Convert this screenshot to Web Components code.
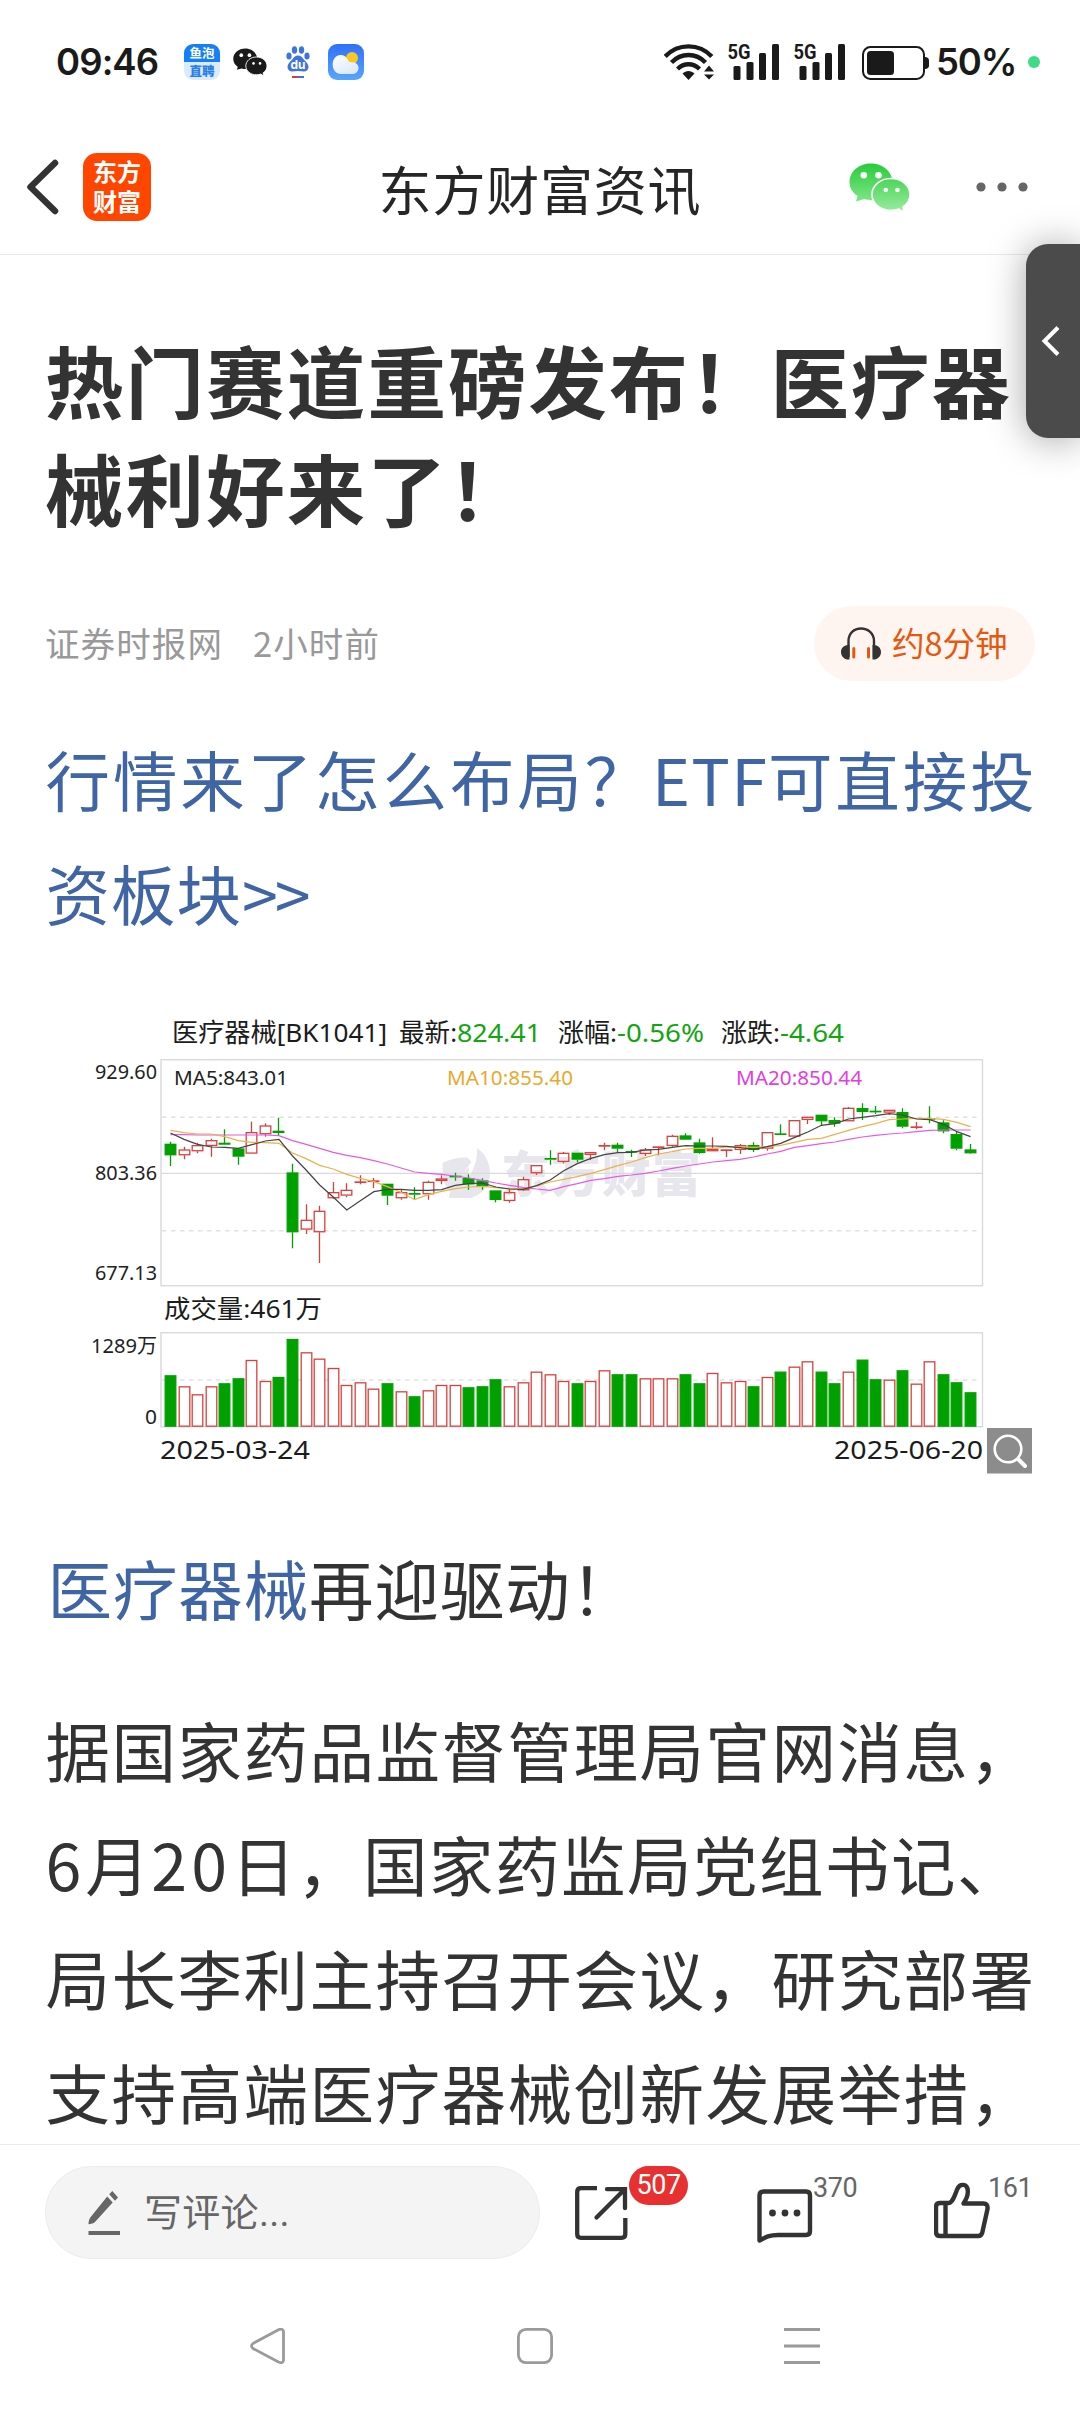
<!DOCTYPE html>
<html lang="zh-CN">
<head>
<meta charset="utf-8">
<title>东方财富资讯</title>
<style>
  html, body {
    margin: 0;
    padding: 0;
  }
  body {
    width: 1080px;
    height: 2412px;
    overflow: hidden;
    background: #fff;
    color: #333;
    font-family: "Noto Sans CJK SC", "Noto Sans", sans-serif;
  }
  /* latin runs inside of the article text */
  .etf { letter-spacing: 1.2px; }
  .more { letter-spacing: -3px; }
  .num { letter-spacing: 4px; }
</style>
</head>
<body>
<news-page>
  <status-bar slot="top" time="09:46" battery="50"></status-bar>
  <app-header slot="top">东方财富资讯</app-header>

  <article-head source="证券时报网" time="2小时前" listen="约8分钟">热门赛道重磅发布！医疗器<br>械利好来了！</article-head>
  <article-text kind="link">行情来了怎么布局？<span class="etf">ETF</span>可直接投<br><span style="letter-spacing:1px">资板块</span><span class="more">&gt;&gt;</span></article-text>
  <stock-chart></stock-chart>
  <article-text kind="lead"><span class="stock">医疗器械</span>再迎驱动！</article-text>
  <article-text>据国家药品监督管理局官网消息，<br><span class="num">6</span>月<span class="num">20</span>日，国家药监局党组书记、<br>局长李利主持召开会议，研究部署<br>支持高端医疗器械创新发展举措，</article-text>

  <comment-bar slot="bottom">写评论...</comment-bar>
  <nav-bar slot="bottom"></nav-bar>
  <side-tab slot="over"></side-tab>
</news-page>

<script>
// two chat bubbles, shared by the status bar and the header
const wechat = (id, w, h, c1, c2) => `
  <svg width="${w}" height="${h}" viewBox="0 0 61 49">
    <defs>
      <linearGradient id="${id}" x1="0" y1="0" x2="0" y2="49" gradientUnits="userSpaceOnUse">
        <stop offset="0" stop-color="${c1}"/><stop offset="1" stop-color="${c2}"/>
      </linearGradient>
    </defs>
    <g fill="url(#${id})">
      <path d="M22 .5C10 .5.5 8.500.5 19c0 6 3 10.500 8 14L7 38.500l8.500-2.500c2 .8 4.500 1.200 7 1.200C34 37.200 43.500 29 43.500 19S34 .5 22 .5z"/>
      <path stroke="#fff" stroke-width="1.600" d="M42 15.500c-10.500 0-19 7-19 16s8.500 16 19 16c3 0 5.500-.5 8-1.400l5 3.400-1-5.500c4.500-3 7-7.500 7-12.500 0-9-8.500-16-19-16z"/>
    </g>
    <g fill="#fff">
      <circle cx="14.800" cy="12.300" r="3.300"/><circle cx="29.500" cy="12.300" r="3.300"/>
      <circle cx="36.800" cy="27" r="2.300"/><circle cx="48.500" cy="27" r="2.300"/>
    </g>
  </svg>`;

class NewsPage extends HTMLElement {
  constructor() {
    super();
    this.attachShadow({ mode: "open" }).innerHTML = `
      <style>
        :host {
          display: flex;
          flex-direction: column;
          width: 1080px;
          height: 2412px;
          position: relative;
          overflow: hidden;
        }
        main {
          flex: 1;
          min-height: 0;
          overflow: hidden;
          padding: 0 45px;
        }
      </style>
      <slot name="top"></slot>
      <main><slot></slot></main>
      <slot name="bottom"></slot>
      <slot name="over"></slot>
    `;
  }
}

class StatusBar extends HTMLElement {
  constructor() {
    super();
    const signal = `
      <svg width="52" height="48" viewBox="-1 -6 52 48" fill="#1a1a1a">
        <text x="-.5" y="15" font-family="Roboto" font-weight="700" font-size="21" textLength="23" lengthAdjust="spacingAndGlyphs">5G</text>
        <rect x="5.500" y="22" width="7" height="14" rx="1.500"/>
        <rect x="18.500" y="18" width="7" height="18" rx="1.500"/>
        <rect x="31" y="9" width="7" height="27" rx="1.500"/>
        <rect x="44" y="0" width="7" height="36" rx="1.500"/>
      </svg>`;
    this.attachShadow({ mode: "open" }).innerHTML = `
      <style>
        :host {
          display: flex;
          align-items: center;
          height: 124px;
          box-sizing: border-box;
          padding: 0 40px 0 56px;
          color: #1a1a1a;
          font-family: Inter, sans-serif;
          font-weight: 600;
        }
        svg { display: block; flex: none; }
        .time { font-size: 36.500px; letter-spacing: -.9px; width: 128px; line-height: 40px; white-space: nowrap; }
        .apps { display: flex; align-items: center; flex: 1; }
        .yupao {
          width: 36px;
          height: 36px;
          border-radius: 9px;
          background: linear-gradient(#1580f6 0 50%, #d9ebfd 50%);
          color: #fff;
          font: 700 12.500px/18px "Noto Sans CJK SC", sans-serif;
          text-align: center;
          overflow: hidden;
        }
        .yupao b { display: block; color: #2a80e8; }
        .wx { margin: 0 19px 0 13px; }
        .weather { margin-left: 18px; }
        .battery { margin: 1px 7px 0 17px; }
        .sig2 { margin-left: 14px; }
        .sig1 { margin-left: 13px; }
        .pct { font-size: 36.500px; width: 84px; letter-spacing: -1.100px; line-height: 40px; white-space: nowrap; }
        .dot { width: 12px; height: 12px; border-radius: 50%; background: #3ddc84; margin-left: 8px; }
      </style>
      <span class="time" id="time"></span>
      <div class="apps">
        <div class="yupao">鱼泡<b>直聘</b></div>
        <div class="wx">${wechat("wxDark", 34, 28, "#1a1a1a", "#1a1a1a")}</div>
        <svg width="24" height="32" viewBox="0 0 24 32" fill="#3f74dc">
          <ellipse cx="8.500" cy="4" rx="2.700" ry="3.800"/>
          <ellipse cx="15.500" cy="4" rx="2.700" ry="3.800"/>
          <ellipse cx="3" cy="10" rx="2.600" ry="3.500"/>
          <ellipse cx="21" cy="10" rx="2.600" ry="3.500"/>
          <path d="M12 9.500c-3 0-4 2-6 4.200-2.500 2.600-4.500 4-4.500 7.300 0 2.600 2 4.500 4.500 4.500 2 0 4-.5 6-.5s4 .5 6 .5c2.500 0 4.500-1.900 4.500-4.500 0-3.300-2-4.700-4.500-7.300-2-2.200-3-4.200-6-4.200z"/>
          <text x="4.500" y="22.500" fill="#fff" font-size="12" font-weight="700" font-family="Inter" textLength="15" lengthAdjust="spacingAndGlyphs">du</text>
          <path fill="#d6403c" d="M6 30h6v2H6z"/><path d="M12 30h6v2h-6z"/>
        </svg>
        <svg class="weather" width="36" height="36" viewBox="0 0 36 36">
          <defs>
            <linearGradient id="sky" x2="0" y2="1"><stop stop-color="#2f70fb"/><stop offset="1" stop-color="#58a6fb"/></linearGradient>
            <linearGradient id="cloud" x2=".6" y2="1"><stop stop-color="#fff"/><stop offset="1" stop-color="#dde9fb"/></linearGradient>
          </defs>
          <rect width="36" height="36" rx="9" fill="url(#sky)"/>
          <circle cx="24" cy="14" r="6" fill="#fdc722"/>
          <path fill="url(#cloud)" d="M12.500 11c3.500 0 6 1.800 7.200 4.600.6 2 2 3 5 3 3.500-.1 5.800 2.400 5.800 5.400 0 3.300-2.500 6-6 6H13c-5 0-8.300-4.200-8.300-9.500S8 11 12.500 11z"/>
        </svg>
      </div>
      <svg width="50" height="36" viewBox="0 0 50 36" fill="none" stroke="#1a1a1a" stroke-width="4.400">
        <path d="M1.200 12.500C14 -1 35 -1 47.800 12.500"/>
        <path d="M7.500 18.500C17 8.500 32 8.500 41.500 18.500"/>
        <path d="M13.500 25c6.500-6.300 15.500-6.300 22 0"/>
        <path fill="#1a1a1a" stroke="none" d="M18.500 29.500c3.500-3.500 8.500-3.500 12 0L24.500 36zM45 21.500l5 6H40zM45 35.500l5-5H40z"/>
      </svg>
      <div class="sig1">${signal}</div>
      <div class="sig2">${signal}</div>
      <svg class="battery" width="67" height="34" viewBox="0 0 67 34">
        <rect x="1" y="1" width="61" height="32" rx="7.500" fill="none" stroke="#1a1a1a" stroke-width="2"/>
        <rect x="5" y="5" width="27" height="24" rx="3.500" fill="#1a1a1a"/>
        <path d="M63 11c2.500 0 4 1.500 4 3.500v5c0 2-1.500 3.500-4 3.500z" fill="#1a1a1a"/>
      </svg>
      <span class="pct" id="pct"></span>
      <span class="dot"></span>
    `;
  }

  connectedCallback() {
    this.shadowRoot.querySelector("#time").textContent = this.getAttribute("time");
    this.shadowRoot.querySelector("#pct").textContent = this.getAttribute("battery") + "%";
  }
}

class AppHeader extends HTMLElement {
  constructor() {
    super();
    this.attachShadow({ mode: "open" }).innerHTML = `
      <style>
        :host {
          display: grid;
          grid-template-columns: 1fr auto 1fr;
          align-items: center;
          height: 131px;
          box-sizing: border-box;
          padding: 0 52px 4px 26px;
          border-bottom: 1px solid #e9e9e9;
        }
        svg { display: block; }
        .left { display: flex; align-items: center; }
        .logo {
          width: 68px;
          height: 68px;
          margin-left: 24px;
          box-sizing: border-box;
          padding-top: 3px;
          border-radius: 14px;
          background: #ff4600;
          color: #fff;
          font-size: 24px;
          font-weight: 700;
          line-height: 30px;
          text-align: center;
        }
        .title { font-size: 53px; letter-spacing: .8px; line-height: 60px; color: #262626; margin-right: -26px; padding-top: 2px; white-space: nowrap; }
        .right { display: flex; align-items: center; justify-content: flex-end; gap: 66px; }
      </style>
      <div class="left">
        <svg width="33" height="56" viewBox="0 0 33 56" fill="none" stroke="#333" stroke-width="6.500" stroke-linecap="round" stroke-linejoin="round"><path d="M29 4L4.500 28 29 52"/></svg>
        <div class="logo">东方<br>财富</div>
      </div>
      <div class="title"><slot></slot></div>
      <div class="right">
        ${wechat("wxGreen", 61, 49, "#26cc38", "#9aeb9f")}
        <svg width="52" height="10" viewBox="0 0 52 10" fill="#666"><circle cx="5" cy="5" r="4.600"/><circle cx="26" cy="5" r="4.600"/><circle cx="47" cy="5" r="4.600"/></svg>
      </div>
    `;
  }
}

class ArticleHead extends HTMLElement {
  constructor() {
    super();
    this.attachShadow({ mode: "open" }).innerHTML = `
      <style>
        :host { display: block; padding-top: 70px; }
        h1 {
          margin: 0 -20px 0 0;
          font-size: 78.500px;
          font-weight: 700;
          line-height: 108px;
          letter-spacing: 2.100px;
          white-space: nowrap;
        }
        .info {
          display: flex;
          align-items: center;
          height: 75px;
          margin-top: 65px;
          color: #999;
          font-size: 34.500px;
          letter-spacing: 1.100px;
          line-height: 40px;
        }
        .info span { margin-top: -4px; }
        .time { margin-left: 30px; flex: 1; }
        .listen {
          display: flex;
          align-items: center;
          height: 75px;
          width: 221px;
          box-sizing: border-box;
          padding-left: 27px;
          border-radius: 38px;
          background: #fef5f1;
          color: #e5580e;
          font-size: 32.500px;
          letter-spacing: 0;
        }
        .listen svg { margin-right: 11px; }
      </style>
      <h1><slot></slot></h1>
      <div class="info">
        <span id="source"></span>
        <span class="time" id="time"></span>
        <div class="listen">
          <svg width="40" height="33" viewBox="0 0 40 33" fill="none">
            <path d="M7.500 30V14C7.500 6.500 13 1.500 20 1.500S33 6.500 33 14v16" stroke="#333" stroke-width="2.400"/>
            <path d="M8.500 18v14.500C3.500 33 0 29.500 0 25s3.500-7.500 8.500-7zM31.500 18v14.500c5 .5 8.500-3 8.500-7.500s-3.500-7.500-8.500-7z" fill="#333"/>
            <path d="M12.800 21.500v8.500M27.500 21.500v8.500" stroke="#e5580e" stroke-width="3" stroke-linecap="round"/>
          </svg>
          <span id="listen"></span>
        </div>
      </div>
    `;
  }

  connectedCallback() {
    for (const name of ["source", "time", "listen"]) {
      this.shadowRoot.querySelector("#" + name).textContent = this.getAttribute(name);
    }
  }
}

class ArticleText extends HTMLElement {
  constructor() {
    super();
    this.attachShadow({ mode: "open" }).innerHTML = `
      <style>
        :host {
          display: block;
          margin: 48px -20px 0 .5px;
          font-size: 64.500px;
          letter-spacing: 1.500px;
          line-height: 114px;
          white-space: nowrap;
        }
        :host([kind="link"]) { margin-top: 40px; color: #3f65a5; letter-spacing: 2.900px; }
        :host([kind="lead"]) { margin-top: 50px; padding-left: 2px; letter-spacing: .9px; }
        ::slotted(.stock) { color: #3f65a5; }
      </style>
      <slot></slot>
    `;
  }
}

// [up, high, top, bottom, low, volumeTop], heights in thirds of a pixel inside each panel
const days = [
  [0,425,433,466,498,286],[1,440,450,466,478,319],[1,428,437,454,460,343],[1,416,422,438,470,319],
  [0,388,430,434,434,310],[0,445,447,470,494,295],[1,365,398,461,461,240],[1,370,378,403,410,303],
  [0,353,394,399,408,291],[0,491,519,697,745,177],[1,613,661,689,702,217],[1,617,634,697,789,236],
  [1,546,578,595,597,264],[1,550,571,587,592,315],[1,526,546,548,553,307],[1,534,543,545,564,326],
  [0,553,553,587,615,310],[1,568,578,595,599,334],[0,562,581,584,598,349],[1,542,547,583,599,331],
  [1,526,537,543,553,315],[1,518,529,532,542,315],[0,523,536,553,569,322],[0,535,543,559,569,319],
  [0,573,573,600,607,298],[1,568,578,603,608,319],[1,530,539,571,573,307],[1,496,497,520,525,275],
  [1,451,476,479,494,283],[1,456,460,486,490,303],[0,460,460,479,487,310],[1,457,458,465,480,303],
  [1,428,437,439,451,271],[0,428,436,446,459,283],[0,449,455,458,471,283],[1,444,450,462,468,295],
  [1,440,441,444,466,295],[1,404,409,438,440,295],[0,400,408,419,419,283],[0,416,429,459,461,310],
  [1,412,448,454,454,279],[1,449,450,452,471,307],[1,432,437,450,462,303],[0,427,437,450,456,319],
  [1,396,398,446,452,291],[0,373,402,404,404,275],[1,362,362,410,412,260],[1,350,352,360,372,244],
  [0,345,346,364,376,275],[0,352,362,371,380,310],[1,321,325,364,364,275],[0,310,326,336,360,239],
  [0,318,334,337,342,298],[1,330,331,338,344,299],[0,325,338,380,385,271],[1,366,381,383,388,311],
  [1,319,356,359,370,244],[0,361,369,394,400,283],[0,395,404,446,451,307],[0,432,450,460,461,337],
];
// days whose candle is green although the volume bar is hollow
const greenCandle = [21, 28, 56];
const ma5 = [399,418,433,441,442,445,434,423,418,468,510,555,591,630,602,575,568,568,571,571,569,556,551,549,561,567,568,557,540,512,491,475,464,458,457,450,448,442,437,438,438,439,443,448,440,430,413,396,376,371,357,352,347,341,345,357,359,373,395,410];
const ma10 = [391,398,402,402,410,422,427,428,430,459,476,496,507,523,535,545,560,577,599,584,574,566,561,559,563,566,566,558,546,538,530,520,509,497,486,473,462,455,447,445,445,441,440,442,440,436,427,418,415,403,391,380,371,359,357,355,355,358,367,380];
const ma20 = [404,404,405,405,405,405,405,405,407,422,433,445,457,466,473,482,492,504,516,520,523,528,534,541,549,556,562,567,571,560,551,541,536,529,525,520,513,505,498,492,486,482,478,471,462,454,442,437,431,426,418,411,406,402,399,395,391,390,390,390];

class StockChart extends HTMLElement {
  constructor() {
    super();
    this.attachShadow({ mode: "open" }).innerHTML = `
      <style>
        :host { display: block; height: 480px; margin-top: 51px; }
        svg { display: block; font-family: "Noto Sans", "Noto Sans CJK SC", sans-serif; }
      </style>
      <svg width="990" height="480" viewBox="0 0 990 480">
        <g fill="#e7e6ec">
          <path d="M397.500 163c7-4 17-6 25-5.500l4 4.500c-7 8-12 18-14 31l-4 1c-5-4-9-9-10-14-1-6-1-12-1-17z"/>
          <path d="M432 148c7 5 13 13 13 25s-7 21-19 25h-22c1-9 5-15 11-22l9-9-1 12c5-8 10-19 9-31z"/>
          <text x="456" y="192" font-family="Noto Sans CJK SC" font-weight="900" font-size="49" textLength="200">东方财富</text>
        </g>
        <g fill="none" stroke="#d9d9de" stroke-width="1.400">
          <rect x="116" y="59.700" width="821.500" height="226"/>
          <rect x="116" y="332.700" width="821.500" height="94"/>
          <path d="M116 173.400h821.500"/>
          <path stroke="#e2e2e2" stroke-dasharray="4.500 4.500" d="M117 117.200h816M117 230.800h816M117 380h816"/>
        </g>
        <g id="bars"></g>
        <g id="lines" fill="none" stroke-width="1.200"></g>
        <g id="labels"></g>
        <rect x="942" y="428" width="45" height="45.500" fill="#8c8c8c"/>
        <g fill="none" stroke="#fff" stroke-linecap="round">
          <circle cx="963" cy="449" r="13.300" stroke-width="2.600"/>
          <path d="M973.500 459.500l6.500 6.500" stroke-width="4"/>
        </g>
      </svg>
    `;
  }

  connectedCallback() {
    const root = this.shadowRoot;
    const x = i => 125 + 13.56 * i;
    const green = "#00a000";
    const red = "#d9403c";

    let bars = "";
    days.forEach(([up, high, top, bottom, low, vol], i) => {
      const cx = Math.round(x(i)) + 0.5;
      const candle = up && !greenCandle.includes(i) ? red : green;
      const volume = up ? red : green;
      const h = Math.max((bottom - top) / 3, 1);
      // the wick stays outside of the body
      bars += `<g stroke-width="1.300">
        <g stroke="${candle}" fill="${candle === green ? green : "none"}">
          <path d="M${cx} ${high / 3}V${top / 3}M${cx} ${bottom / 3}V${low / 3}"/>
          <rect x="${cx - 5.3}" y="${top / 3}" width="10.600" height="${h - 0.6}"/>
        </g>
        <rect stroke="${volume}" fill="${up ? "#fff" : green}" x="${cx - 5.3}" y="${280 + vol / 3 + 0.5}" width="10.600" height="${(440 - vol) / 3 - 1}"/>
      </g>`;
    });
    root.querySelector("#bars").innerHTML = bars;

    root.querySelector("#lines").innerHTML =
      [[ma20, "#e65ae6"], [ma10, "#eeb04a"], [ma5, "#444"]].map(([ys, color]) =>
        `<polyline stroke="${color}" points="${ys.map((y, i) => `${x(i) + 0.5},${y / 3}`).join(" ")}"/>`
      ).join("");

    // text, x, baseline, drawn width, size, colour
    root.querySelector("#labels").innerHTML = [
      ["医疗器械[BK1041]", 127, 42, 215, 26, "#1c1c1c"],
      ["最新:", 354, 42, 58, 26, "#1c1c1c"],
      ["824.41", 412, 42, 84, 26, "#12a512"],
      ["涨幅:", 513, 42, 59, 26, "#1c1c1c"],
      ["-0.56%", 572, 42, 87, 26, "#12a512"],
      ["涨跌:", 676, 42, 59, 26, "#1c1c1c"],
      ["-4.64", 735, 42, 64, 26, "#12a512"],
      ["929.60", 50, 78.500, 62, 20, "#222"],
      ["803.36", 50, 179.500, 62, 20, "#222"],
      ["677.13", 50, 280, 62, 20, "#222"],
      ["MA5:843.01", 129, 85, 114, 20, "#222"],
      ["MA10:855.40", 402, 85, 126, 20, "#eaa82c"],
      ["MA20:850.44", 691, 85, 126, 20, "#e23ce2"],
      ["成交量:461万", 119, 317.500, 158, 25.500, "#1c1c1c"],
      ["1289万", 46, 352.500, 66, 20, "#222"],
      ["0", 100, 423.500, 12, 20, "#222"],
      ["2025-03-24", 115, 459, 150, 25, "#1c1c1c"],
      ["2025-06-20", 789, 459, 149, 25, "#1c1c1c"],
    ].map(([text, lx, ly, w, size, color]) =>
      `<text x="${lx}" y="${ly}" textLength="${w}" lengthAdjust="spacingAndGlyphs" font-size="${size}" fill="${color}">${text}</text>`
    ).join("");
  }
}

class CommentBar extends HTMLElement {
  constructor() {
    super();
    this.attachShadow({ mode: "open" }).innerHTML = `
      <style>
        :host {
          display: flex;
          align-items: flex-start;
          height: 136px;
          box-sizing: border-box;
          padding: 21px 0 0 45px;
          border-top: 1px solid #ebebeb;
          background: #fff;
        }
        .input {
          display: flex;
          align-items: center;
          width: 495px;
          height: 93px;
          box-sizing: border-box;
          padding-left: 42px;
          border: 1px solid #ececec;
          border-radius: 47px;
          background: #f4f4f4;
          color: #666;
          font: 38px/50px Roboto, "Noto Sans CJK SC", sans-serif;
        }
        .input svg { margin-right: 23px; }
        .input span { letter-spacing: .3px; }
        action-item.share { margin: 20px 0 0 35px; }
        action-item.chat { margin: 23px 0 0 129px; }
        action-item.like { margin: 15px 0 0 121px; }
      </style>
      <div class="input">
        <svg width="33" height="44" viewBox="0 0 33 44" fill="#666">
          <path d="M19.200 5.500l5.500 6L7 31c-1.500 1.500-4 2-6.500 2.300 0-2.300.5-5 1.800-6.700zM21.200 3.300L24.300 0 30 6.500l-3 3.300zM.500 40h31.500v4H.5z"/>
        </svg>
        <span><slot></slot></span>
      </div>
      <action-item class="share" count="507" badge>
        <svg width="53" height="54" viewBox="0 0 53 54" fill="none" stroke="#333" stroke-width="4.300">
          <path d="M22 2.200H6Q2.200 2.200 2.200 6v42q0 3.800 3.800 3.800h40.500q3.800 0 3.800-3.800V32"/>
          <path d="M32 3.200h18v19M49 4L21.500 31.500" stroke-linecap="round"/>
        </svg>
      </action-item>
      <action-item class="chat" count="370">
        <svg width="56" height="54" viewBox="0 0 56 54" fill="none" stroke="#333" stroke-width="4.400" stroke-linejoin="round">
          <path d="M2.500 51.500V6.500q0-4 4-4H49q4 0 4 4V42q0 4-4 4H21C12 46 8 48.500 2.500 51.500z"/>
          <g fill="#333" stroke="none"><circle cx="15.500" cy="24" r="3.400"/><circle cx="28" cy="24" r="3.400"/><circle cx="40" cy="24" r="3.400"/></g>
        </svg>
      </action-item>
      <action-item class="like" count="161">
        <svg width="56" height="58" viewBox="0 0 56 58" fill="none" stroke="#333" stroke-width="4.400" stroke-linejoin="round">
          <path d="M11.500 22H6q-4 0-4 4v25q0 4 4 4h38q3.500 0 4.300-3.500L53.500 28q.6-5.500-4-5.500H29.500c3.500-5 4.500-9 4.300-12.500-.3-7.500-7.800-8-10.500-2C21 14 18.500 22 14.500 22zM11.500 22v33"/>
        </svg>
      </action-item>
    `;
  }
}

class ActionItem extends HTMLElement {
  constructor() {
    super();
    this.attachShadow({ mode: "open" }).innerHTML = `
      <style>
        :host { display: block; position: relative; height: 58px; }
        ::slotted(svg) { display: block; }
        .count {
          position: absolute;
          left: 56px;
          top: -17px;
          color: #666;
          font: 27px/32px Roboto, sans-serif;
          letter-spacing: -.4px;
        }
        :host([badge]) .count {
          left: 54px;
          top: -20px;
          padding: 0 7.500px;
          border-radius: 20px;
          background: #e83030;
          color: #fff;
          font-size: 27px;
          line-height: 39px;
        }
        :host(.like) .count { left: 54px; top: -9px; }
      </style>
      <slot></slot>
      <span class="count"></span>
    `;
  }

  connectedCallback() {
    this.shadowRoot.querySelector(".count").textContent = this.getAttribute("count");
  }
}

class NavBar extends HTMLElement {
  constructor() {
    super();
    this.attachShadow({ mode: "open" }).innerHTML = `
      <style>
        :host {
          display: flex;
          justify-content: space-between;
          align-items: center;
          height: 132px;
          box-sizing: border-box;
          padding: 0 260px 0 250px;
          background: #fff;
        }
        svg { fill: none; stroke: #9a9a9a; stroke-width: 2.800; stroke-linejoin: round; }
      </style>
      <svg width="36" height="36" viewBox="0 0 36 36"><path d="M28.500 1.700L3 15.500Q0 18 3 20.500L28.500 34Q33.500 36 33.500 32V4Q33.500 0 28.500 1.700z"/></svg>
      <svg width="36" height="36" viewBox="0 0 36 36"><rect x="1.400" y="1.400" width="33.200" height="33.200" rx="7.500"/></svg>
      <svg width="36" height="36" viewBox="0 0 36 36"><path d="M0 1.500h36M0 18h36M0 34.500h36"/></svg>
    `;
  }
}

class SideTab extends HTMLElement {
  constructor() {
    super();
    this.attachShadow({ mode: "open" }).innerHTML = `
      <style>
        :host {
          display: flex;
          align-items: center;
          position: absolute;
          top: 244px;
          right: 0;
          width: 54px;
          height: 194px;
          box-sizing: border-box;
          padding-left: 15px;
          border-radius: 22px 0 0 22px;
          background: #4b4b4b;
          box-shadow: 0 2px 38px rgba(0, 0, 0, .36);
        }
      </style>
      <svg width="19" height="30" viewBox="0 0 19 30" fill="none" stroke="#fff" stroke-width="4"><path d="M17 1.500L3.500 15 17 28.500"/></svg>
    `;
  }
}

customElements.define("news-page", NewsPage);
customElements.define("status-bar", StatusBar);
customElements.define("app-header", AppHeader);
customElements.define("article-head", ArticleHead);
customElements.define("article-text", ArticleText);
customElements.define("stock-chart", StockChart);
customElements.define("action-item", ActionItem);
customElements.define("comment-bar", CommentBar);
customElements.define("nav-bar", NavBar);
customElements.define("side-tab", SideTab);
</script>
</body>
</html>
